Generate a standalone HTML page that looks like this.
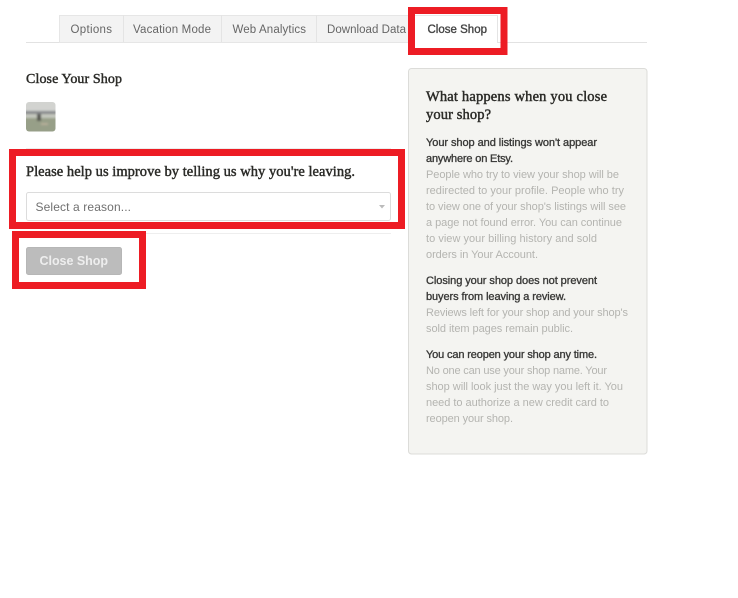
<!DOCTYPE html>
<html lang="en">
<head>
<meta charset="utf-8">
<title>Close Shop</title>
<style>
html,body{margin:0;padding:0;background:#fff;width:738px;height:598px;overflow:hidden}
svg{display:block}
text{font-family:"Liberation Sans",sans-serif;white-space:pre}
.s{font-family:"Liberation Serif",serif;fill:#2b2b28;stroke:#2b2b28;stroke-width:.45}
.t{font-size:11.5px;fill:#666}
.b{font-size:11px;fill:#3a3a38;stroke:#3a3a38;stroke-width:.35}
.g{font-size:11px;fill:#b4b4b0}
</style>
</head>
<body>
<svg width="738" height="598" viewBox="0 0 738 598" xmlns="http://www.w3.org/2000/svg">
<defs>
<filter id="soft" x="-5%" y="-5%" width="110%" height="110%"><feGaussianBlur stdDeviation="0.35"/></filter>
<filter id="thumb" x="-5%" y="-5%" width="110%" height="110%"><feGaussianBlur stdDeviation="1"/></filter>
<clipPath id="tc"><rect x="26" y="102" width="29.5" height="29.5" rx="3"/></clipPath>
</defs>
<g filter="url(#soft)">
<!-- tabs -->
<rect x="26" y="42" width="621" height="1" fill="#e2e2e2"/>
<rect x="59.5" y="15.5" width="349" height="27" fill="#f3f3f3" stroke="#e6e6e6"/>
<rect x="123" y="15" width="1" height="27" fill="#e4e4e4"/>
<rect x="221" y="15" width="1" height="27" fill="#e4e4e4"/>
<rect x="316" y="15" width="1" height="27" fill="#e4e4e4"/>
<text class="t" x="70.5" y="33" textLength="41.5">Options</text>
<text class="t" x="133" y="33" textLength="78">Vacation Mode</text>
<text class="t" x="232.5" y="33" textLength="73.5">Web Analytics</text>
<text class="t" x="327" y="33" textLength="79">Download Data</text>
<rect x="415" y="14" width="83" height="34" fill="#fff"/>
<rect x="497" y="15" width="1" height="28" fill="#e4e4e4"/>
<rect x="415" y="15" width="83" height="1" fill="#e8e8e8"/>
<text x="427.5" y="33" textLength="59.5" style="font-size:11.5px;fill:#444;stroke:#444;stroke-width:.35">Close Shop</text>

<!-- left column -->
<text class="s" x="26" y="83" textLength="96" style="font-size:14px">Close Your Shop</text>

<g clip-path="url(#tc)"><g filter="url(#thumb)">
<rect x="22" y="98" width="38" height="38" fill="#939b88"/>
<rect x="22" y="98" width="38" height="13" fill="#d2d3d0"/>
<rect x="22" y="111" width="38" height="3" fill="#85878a"/>
<rect x="22" y="114" width="38" height="4" fill="#c4c7be"/>
<rect x="22" y="118" width="38" height="18" fill="#979f88"/>
<rect x="37" y="114" width="4" height="7" fill="#55554f"/>
<rect x="41" y="123" width="7" height="2" fill="#b8b09a"/>
</g></g>

<rect x="26" y="148" width="365" height="1" fill="#ececec"/>
<rect x="26" y="233" width="365" height="1" fill="#eeeeee"/>

<text class="s" x="26" y="176" textLength="329" style="font-size:14.5px">Please help us improve by telling us why you're leaving.</text>

<rect x="26.5" y="192.5" width="364" height="28" rx="2" fill="#fff" stroke="#dcdcdc"/>
<text x="35.5" y="211" textLength="95.5" style="font-size:12px;fill:#707070">Select a reason...</text>
<path d="M379 205h6l-3 3.5z" fill="#bbb"/>

<rect x="26.5" y="247.5" width="95" height="27" rx="2" fill="#bcbcbc" stroke="#b6b6b6"/>
<text x="39.5" y="265" textLength="68.5" style="font-size:12.5px;fill:#eeeeee;font-weight:bold">Close Shop</text>

<!-- side panel -->
<rect x="408.5" y="68.5" width="238.5" height="385.5" rx="3" fill="#f4f4f1" stroke="#dcdcd9"/>
<text class="s" x="426" y="101" textLength="181" style="font-size:14.5px">What happens when you close</text>
<text class="s" x="426" y="119" textLength="65" style="font-size:14.5px">your shop?</text>

<text class="b" x="426" y="146" textLength="171">Your shop and listings won't appear</text>
<text class="b" x="426" y="162" textLength="87">anywhere on Etsy.</text>
<text class="g" x="426" y="178" textLength="193">People who try to view your shop will be</text>
<text class="g" x="426" y="194" textLength="198">redirected to your profile. People who try</text>
<text class="g" x="426" y="210" textLength="200">to view one of your shop's listings will see</text>
<text class="g" x="426" y="226" textLength="196">a page not found error. You can continue</text>
<text class="g" x="426" y="242" textLength="171">to view your billing history and sold</text>
<text class="g" x="426" y="258" textLength="112">orders in Your Account.</text>

<text class="b" x="426" y="284" textLength="171">Closing your shop does not prevent</text>
<text class="b" x="426" y="300" textLength="140">buyers from leaving a review.</text>
<text class="g" x="426" y="316" textLength="202">Reviews left for your shop and your shop's</text>
<text class="g" x="426" y="332" textLength="147">sold item pages remain public.</text>

<text class="b" x="426" y="358" textLength="171">You can reopen your shop any time.</text>
<text class="g" x="426" y="374" textLength="181">No one can use your shop name. Your</text>
<text class="g" x="426" y="390" textLength="197">shop will look just the way you left it. You</text>
<text class="g" x="426" y="406" textLength="183">need to authorize a new credit card to</text>
<text class="g" x="426" y="422" textLength="87">reopen your shop.</text>
</g>

<!-- red highlight boxes -->
<rect x="411.5" y="10.5" width="92.5" height="41" fill="none" stroke="#ed1c24" stroke-width="7"/>
<rect x="12.5" y="152.5" width="389" height="73" fill="none" stroke="#ed1c24" stroke-width="7"/>
<rect x="15.5" y="234.5" width="127" height="51" fill="none" stroke="#ed1c24" stroke-width="7"/>
</svg>
</body>
</html>
